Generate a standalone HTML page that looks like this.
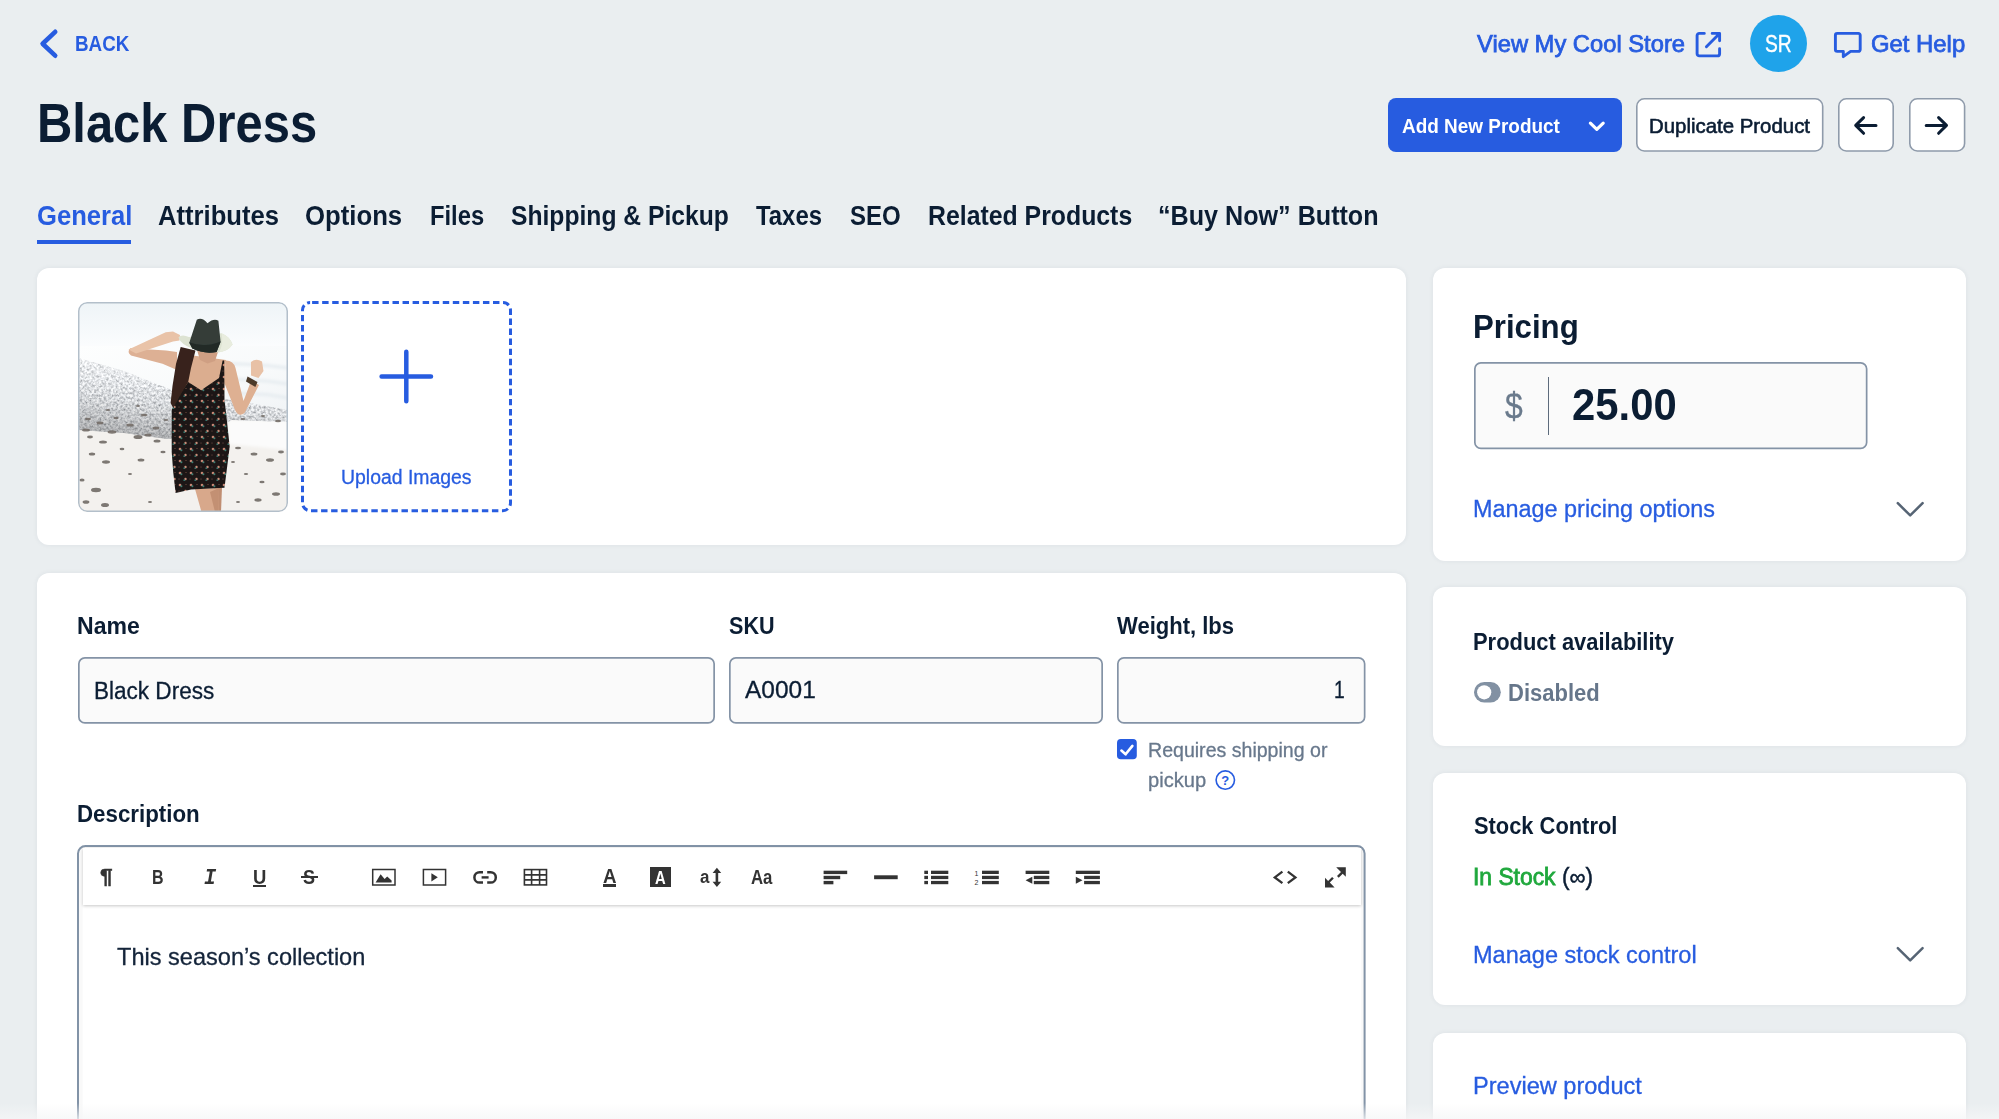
<!DOCTYPE html>
<html lang="en">
<head>
<meta charset="utf-8">
<title>Black Dress</title>
<style>
html,body{margin:0;padding:0;}
body{width:1999px;height:1119px;overflow:hidden;background:#eaeef0;font-family:"Liberation Sans",sans-serif;position:relative;}
.t{position:absolute;white-space:nowrap;line-height:1;transform-origin:0 0;display:block;}
.card{position:absolute;background:#fff;border-radius:12px;box-shadow:0 0 5px rgba(40,60,80,0.07);}
.inp{position:absolute;box-sizing:border-box;background:#fafafa;border:1.5px solid #8896a8;border-radius:7px;}
.btn{position:absolute;box-sizing:border-box;background:#fff;border:1.7px solid #8c98a9;border-radius:8.5px;}
.abs{position:absolute;}
svg{position:absolute;overflow:visible;}
.ti{position:absolute;color:#333;line-height:1;white-space:nowrap;}
</style>
</head>
<body>
<!-- tab underline -->
<div class="abs" style="left:37px;top:239.5px;width:93.5px;height:4.5px;background:#275ce0;"></div>
<!-- header buttons -->
<div class="abs" style="left:1388px;top:97.5px;width:234px;height:54px;background:#275ce0;border-radius:8px;"></div>
<svg style="left:1636px;top:97.6px;" width="187.5" height="53.8" viewBox="0 0 187.5 53.8"><rect x="0.8" y="0.8" width="185.9" height="52.199999999999996" rx="7.5" ry="7.5" fill="#fff" stroke="#8f9bab" stroke-width="1.6"/></svg>
<svg style="left:1838px;top:97.6px;" width="56" height="53.8" viewBox="0 0 56 53.8"><rect x="0.8" y="0.8" width="54.4" height="52.199999999999996" rx="7.5" ry="7.5" fill="#fff" stroke="#8f9bab" stroke-width="1.6"/></svg>
<svg style="left:1908.5px;top:97.6px;" width="56.4" height="53.8" viewBox="0 0 56.4 53.8"><rect x="0.8" y="0.8" width="54.8" height="52.199999999999996" rx="7.5" ry="7.5" fill="#fff" stroke="#8f9bab" stroke-width="1.6"/></svg>
<!-- avatar -->
<div class="abs" style="left:1750px;top:15.3px;width:57px;height:57px;border-radius:50%;background:#1fa3ea;"></div>
<!-- cards -->
<div class="card" style="left:37px;top:268px;width:1369px;height:277px;"></div>
<div class="card" style="left:37px;top:572.5px;width:1369px;height:600px;"></div>
<div class="card" style="left:1433px;top:267.5px;width:532.5px;height:293px;"></div>
<div class="card" style="left:1433px;top:587.2px;width:532.5px;height:159px;"></div>
<div class="card" style="left:1433px;top:772.7px;width:532.5px;height:232.6px;"></div>
<div class="card" style="left:1433px;top:1032.8px;width:532.5px;height:200px;"></div>
<!-- inputs -->
<svg style="left:77.5px;top:657px;" width="637" height="66.8" viewBox="0 0 637 66.8"><rect x="0.85" y="0.85" width="635.3" height="65.1" rx="6" ry="6" fill="#fafafa" stroke="#8493a6" stroke-width="1.7"/></svg>
<svg style="left:728.6px;top:657px;" width="374" height="66.8" viewBox="0 0 374 66.8"><rect x="0.85" y="0.85" width="372.3" height="65.1" rx="6" ry="6" fill="#fafafa" stroke="#8493a6" stroke-width="1.7"/></svg>
<svg style="left:1117px;top:657px;" width="248.5" height="66.8" viewBox="0 0 248.5 66.8"><rect x="0.85" y="0.85" width="246.8" height="65.1" rx="6" ry="6" fill="#fafafa" stroke="#8493a6" stroke-width="1.7"/></svg>
<svg style="left:1473.75px;top:362px;" width="393.5" height="87.3" viewBox="0 0 393.5 87.3"><rect x="0.85" y="0.85" width="391.8" height="85.6" rx="6" ry="6" fill="#fafafa" stroke="#8493a6" stroke-width="1.7"/></svg>
<div class="abs" style="left:1547.7px;top:377px;width:1.2px;height:57.5px;background:#5d6b7c;"></div>
<!-- editor -->
<svg style="left:77.2px;top:845.1px;" width="1288.6" height="320" viewBox="0 0 1288.6 320"><rect x="1" y="1" width="1286.6" height="318" rx="7.5" ry="7.5" fill="#f9f9f9" stroke="#8293a7" stroke-width="2"/><rect x="5.6" y="3" width="1278.6" height="317" fill="#fff"/></svg>
<div class="abs" style="left:83px;top:848px;width:1278px;height:56.5px;background:#fff;box-shadow:0 1px 3px rgba(0,0,0,0.22);"></div>
<!-- upload dashed box -->
<svg style="left:301.4px;top:301.2px;" width="211" height="211.2" viewBox="0 0 211 211.2">
<rect x="1.5" y="1.5" width="208" height="208.2" rx="7.6" ry="7.6" fill="none" stroke="#275ce0" stroke-width="3" stroke-dasharray="6.45 3.6" stroke-dashoffset="-2"/>
<path d="M80.6 75.5H130M105.3 50.7V100.2" stroke="#275ce0" stroke-width="4.5" stroke-linecap="round" fill="none"/>
</svg>
<!-- checkbox -->
<svg style="left:1116.9px;top:739.1px;" width="20" height="21" viewBox="0 0 20 21">
<rect x="0" y="0" width="19.8" height="20.2" rx="3.8" fill="#275ce0"/>
<path d="M4.4 11.6L8.6 15.3L15.4 6.9" stroke="#fff" stroke-width="2.6" fill="none" stroke-linecap="round" stroke-linejoin="round"/>
</svg>
<!-- product photo (vector approximation) -->
<div class="abs" style="left:77.7px;top:301.6px;width:210px;height:210px;box-sizing:border-box;border-radius:9px;overflow:hidden;background:#f2f4f5;">
<svg style="left:0;top:0;" width="210" height="210" viewBox="0 0 210 210">
<defs>
<linearGradient id="sky" gradientUnits="userSpaceOnUse" x1="0" y1="0" x2="0" y2="48"><stop offset="0" stop-color="#eef4f7"/><stop offset="1" stop-color="#fcfdfe"/></linearGradient>
<linearGradient id="sea" x1="0" y1="0" x2="1" y2="1"><stop offset="0" stop-color="#fdfefe"/><stop offset="0.6" stop-color="#f8fafb"/><stop offset="1" stop-color="#f1f4f6"/></linearGradient>
<linearGradient id="peb" x1="0" y1="0" x2="0" y2="1"><stop offset="0" stop-color="#dcdee0"/><stop offset="0.5" stop-color="#c3c5c7"/><stop offset="1" stop-color="#b1b1b1"/></linearGradient>
<filter id="nz" x="0" y="0" width="100%" height="100%">
<feTurbulence type="fractalNoise" baseFrequency="0.42" numOctaves="3" seed="7" result="n"/>
<feColorMatrix in="n" type="matrix" values="1.15 0 0 0 0.17  1.15 0 0 0 0.19  1.15 0 0 0 0.215  0 0 0 0 1" result="a"/>
<feComposite in="a" in2="SourceGraphic" operator="in"/>
</filter>
<filter id="b1"><feGaussianBlur stdDeviation="0.7"/></filter>
<filter id="b2"><feGaussianBlur stdDeviation="1.6"/></filter>
<pattern id="flo" width="11" height="12" patternUnits="userSpaceOnUse">
<rect width="11" height="12" fill="#1d1917"/>
<circle cx="3" cy="3" r="1.3" fill="#c58472"/><circle cx="4.4" cy="4.3" r="1" fill="#3f7f74"/>
<circle cx="8.5" cy="9" r="1.2" fill="#c98d7a"/><circle cx="7.3" cy="10.2" r="0.9" fill="#37756c"/>
<circle cx="9" cy="2.5" r="0.5" fill="#8a5548"/><circle cx="2" cy="9" r="0.5" fill="#8f5a4e"/>
</pattern>
</defs>
<rect width="210" height="210" fill="url(#sky)"/>
<!-- sea -->
<path d="M0 44H210V112L166 100L94 88L46 69L0 56Z" fill="url(#sea)"/>
<path d="M0 46H210" stroke="#e4ebef" stroke-width="2" filter="url(#b1)"/>
<path d="M120 62Q165 60 210 66M140 78Q175 76 210 82M150 92Q180 90 210 96" stroke="#e6ecf0" stroke-width="3" fill="none" filter="url(#b2)"/>
<!-- sand -->
<path d="M0 118H210V210H0Z" fill="#f3f1ee"/>
<path d="M150 118H210V148L150 142Z" fill="#fbfbfb" filter="url(#b2)"/>
<!-- pebbles -->
<linearGradient id="pebd" x1="0.6" y1="0" x2="0.3" y2="1"><stop offset="0" stop-color="#fff" stop-opacity="0.6"/><stop offset="0.4" stop-color="#fff" stop-opacity="0.1"/><stop offset="0.55" stop-color="#444" stop-opacity="0.05"/><stop offset="1" stop-color="#222" stop-opacity="0.3"/></linearGradient>
<g filter="url(#b1)">
<path d="M0 56L46 69L94 88L166 100L210 108V120L154 118L122 134L89 137L46 131L0 128Z" fill="#000" filter="url(#nz)"/>
<path d="M0 56L46 69L94 88L166 100L210 108V120L154 118L122 134L89 137L46 131L0 128Z" fill="url(#pebd)"/>
</g>
<g fill="#6f6862" filter="url(#b1)" opacity="0.85">
<ellipse cx="10" cy="117" rx="3" ry="1.3"/><ellipse cx="22" cy="121" rx="3.4" ry="1.4"/><ellipse cx="38" cy="116" rx="2.6" ry="1.2"/><ellipse cx="52" cy="123" rx="3.6" ry="1.5"/>
<ellipse cx="66" cy="113" rx="3.2" ry="1.3"/><ellipse cx="78" cy="126" rx="3.4" ry="1.5"/><ellipse cx="30" cy="108" rx="2.2" ry="1"/><ellipse cx="60" cy="104" rx="2" ry="0.9"/>
<ellipse cx="8" cy="128" rx="4" ry="1.6"/><ellipse cx="34" cy="130" rx="4.4" ry="1.7"/><ellipse cx="70" cy="133" rx="3.6" ry="1.5"/><ellipse cx="88" cy="118" rx="2.4" ry="1.1"/>
<ellipse cx="165" cy="117" rx="2.6" ry="1.1"/><ellipse cx="185" cy="114" rx="2.2" ry="1"/><ellipse cx="200" cy="119" rx="3" ry="1.2"/>
</g>
<!-- scattered rocks on sand -->
<g fill="#7d7873" filter="url(#b1)">
<ellipse cx="12" cy="135" rx="3" ry="1.4"/><ellipse cx="25" cy="140" rx="4" ry="1.6"/><ellipse cx="60" cy="135" rx="4.5" ry="2"/><ellipse cx="79" cy="139" rx="3.5" ry="1.6"/>
<ellipse cx="14" cy="152" rx="3.2" ry="1.5"/><ellipse cx="28" cy="160" rx="4" ry="1.7"/><ellipse cx="63" cy="158" rx="3.4" ry="1.5"/><ellipse cx="44" cy="147" rx="2.4" ry="1.2"/>
<ellipse cx="4" cy="178" rx="2.6" ry="1.6"/><ellipse cx="18" cy="188" rx="5" ry="2.2"/><ellipse cx="27" cy="203" rx="4" ry="2"/><ellipse cx="8" cy="200" rx="3.4" ry="1.8"/>
<ellipse cx="72" cy="200" rx="2" ry="1"/><ellipse cx="52" cy="172" rx="2" ry="1"/><ellipse cx="85" cy="150" rx="2.6" ry="1.2"/>
<ellipse cx="160" cy="146" rx="3" ry="1.3"/><ellipse cx="176" cy="152" rx="3.4" ry="1.5"/><ellipse cx="192" cy="158" rx="4" ry="1.8"/><ellipse cx="203" cy="150" rx="3" ry="1.4"/>
<ellipse cx="168" cy="172" rx="2.2" ry="1.1"/><ellipse cx="184" cy="180" rx="2.6" ry="1.2"/><ellipse cx="198" cy="192" rx="4" ry="1.8"/><ellipse cx="180" cy="198" rx="3.6" ry="1.7"/><ellipse cx="160" cy="200" rx="2" ry="1"/>
<ellipse cx="205" cy="172" rx="3" ry="1.4"/><ellipse cx="155" cy="160" rx="2" ry="1"/>
</g>
<!-- woman -->
<g filter="url(#b1)">
<!-- legs -->
<path d="M136 186L144 185.5L143 210H136Z" fill="#c08e72"/>
<path d="M117 187L141 186L140.7 210H123.5Z" fill="#d8a88b"/>
<path d="M132 190L137 210H140.7L141 186Z" fill="#c39073"/>
<!-- raised arm (viewer left) -->
<path d="M52.3 46.2L88 48.6L99 50L99 68L84.5 61.7L53 53.4Q48.5 50 52.3 46.2Z" fill="#ddb094"/>
<path d="M50.5 47.6L87.7 30.2L95 29.4L102 33L101.5 38.6L95 39.6L58 51.5Z" fill="#e9c3a8"/>
<!-- other arm (viewer right) -->
<path d="M148 58.5Q155.5 58.5 157.5 66L165.5 99L173.2 78.5L181 83L166.5 111Q160.5 115.5 157 108L146 80Z" fill="#deb092"/>
<path d="M173 60Q178 56 184 59.5L185.5 69L180.5 76L173 73.5Z" fill="#e8c1a6"/>
<path d="M169.5 74.5L179.5 80L177.4 85L168 79.6Z" fill="#4d3b2c"/>
<!-- torso skin -->
<path d="M104 52L148 58L146 92L104 92Z" fill="#dbad8f"/>
<path d="M119 48L140 50L137 59L129.5 61.5L122 58Z" fill="#cf9f83"/>
<!-- dress -->
<path d="M110.2 80L123.1 88.2L141 76L144.6 58.4L146.2 58.6L146.5 98L148.5 115L151.7 144.4L146.5 185.8L113.1 187.6L97.6 191L95.2 170L93.7 150L93.7 108L99.5 94.9Z" fill="url(#flo)"/>
<!-- hair -->
<path d="M102.7 45L117.5 48.4L113 66L110.2 80L103 92L98.5 100L95.2 106L92.6 101L94.5 84L98 62Z" fill="#38231b"/>
<!-- hat brim -->
<path d="M100.4 35.6Q103.5 31.5 111 35L143.5 31.2Q152 34.5 154.6 42.6Q150 49.5 140 50.4L114 46.6Q103 42.4 100.4 35.6Z" fill="#dde3d2"/>
<path d="M143.5 31.2Q152 34.5 154.6 42.6Q150 49.5 141 50.2Q146 42 143.5 31.2Z" fill="#e9eddf"/>
<!-- hat crown -->
<path d="M118.8 17.7Q124 14.8 129.5 21.2Q136 15.8 140.4 18.8L142.6 40L138.6 50Q126 52.4 114.3 46.6L111.2 41Z" fill="#343e39"/>
<path d="M111.4 40.2Q126 46 142.6 39.4L138.6 50Q126 52.4 114.3 46.6Z" fill="#232b28"/>
</g>
</svg>
<svg style="left:0;top:0;" width="210" height="210" viewBox="0 0 210 210"><rect x="0.75" y="0.75" width="208.5" height="208.5" rx="8.3" ry="8.3" fill="none" stroke="#b3bfca" stroke-width="1.5"/></svg>
</div>
<!-- header icons -->
<svg style="left:0;top:0;" width="1999" height="160" viewBox="0 0 1999 160" fill="none" stroke-linecap="round" stroke-linejoin="round">
<path d="M55.2 31.8L42.6 43.75L55.2 55.7" stroke="#275ce0" stroke-width="4.6"/>
<g stroke="#275ce0" stroke-width="2.9">
<path d="M1704.3 33.4H1699.3a2.2 2.2 0 0 0 -2.2 2.2V53.7a2.2 2.2 0 0 0 2.2 2.2H1717.4a2.2 2.2 0 0 0 2.2 -2.2V48.7"/>
<path d="M1712.2 33.4H1719.6V40.8M1719.3 33.7L1706.4 46.7"/>
<path d="M1837.2 33.4H1858.4a1.8 1.8 0 0 1 1.8 1.8V49.6a1.8 1.8 0 0 1 -1.8 1.8H1850.6L1843.3 56.6V51.4H1837.2a1.8 1.8 0 0 1 -1.8 -1.8V35.2a1.8 1.8 0 0 1 1.8 -1.8Z"/>
</g>
<path d="M1590.4 123.2L1596.8 129.3L1603.2 123.2" stroke="#fff" stroke-width="3.2"/>
<g stroke="#0b1d33" stroke-width="3">
<path d="M1876 125.4H1856.2M1863.6 117.6L1855.7 125.4L1863.6 133.3"/>
<path d="M1926.2 125.4H1946M1938.6 117.6L1946.5 125.4L1938.6 133.3"/>
</g>
</svg>
<!-- card chevrons -->
<svg style="left:1890px;top:495px;" width="40" height="30" viewBox="1890 495 40 30" fill="none" stroke="#566474" stroke-width="2.5" stroke-linecap="round" stroke-linejoin="round"><path d="M1897.8 503.2L1910.2 515.4L1922.6 503.2"/></svg>
<svg style="left:1890px;top:940px;" width="40" height="30" viewBox="1890 940 40 30" fill="none" stroke="#566474" stroke-width="2.5" stroke-linecap="round" stroke-linejoin="round"><path d="M1897.8 948.2L1910.2 960.4L1922.6 948.2"/></svg>
<!-- toggle -->
<svg style="left:1473.5px;top:681.8px;" width="27" height="21" viewBox="0 0 27 21"><rect x="0" y="0" width="26.8" height="20.6" rx="10.3" fill="#8291a3"/><circle cx="10.2" cy="10.35" r="7.1" fill="#fff"/></svg>
<!-- help icon -->
<svg style="left:1215px;top:769.7px;" width="21" height="21" viewBox="0 0 21 21"><circle cx="10.3" cy="10.1" r="9.2" fill="none" stroke="#275ce0" stroke-width="1.6"/><text x="10.3" y="15.1" text-anchor="middle" font-family="Liberation Sans, sans-serif" font-weight="700" font-size="13" fill="#275ce0">?</text></svg>
<!-- toolbar glyph buttons (text) -->
<span class="ti" style="left:100.4px;top:865.2px;font-size:21px;font-weight:700;transform:scaleX(1.08);transform-origin:0 0;-webkit-text-stroke:0.5px #333;">&para;</span>
<span class="ti" style="left:152.3px;top:867.2px;font-size:20.5px;font-weight:700;transform:scaleX(0.78);transform-origin:0 0;">B</span>
<span class="ti" style="left:203.5px;top:868.4px;font-size:22px;font-weight:700;font-style:italic;font-family:'Liberation Mono',monospace;transform:scaleX(0.92);transform-origin:0 0;">I</span>
<span class="ti" style="left:252.6px;top:867.2px;font-size:20.5px;font-weight:700;transform:scaleX(0.9);transform-origin:0 0;">U</span>
<div class="abs" style="left:252.6px;top:884.8px;width:13.6px;height:2.2px;background:#333;"></div>
<span class="ti" style="left:303.2px;top:867.2px;font-size:20.5px;font-weight:700;transform:scaleX(0.88);transform-origin:0 0;">S</span>
<div class="abs" style="left:301px;top:875.8px;width:17.2px;height:1.8px;background:#333;"></div>
<span class="ti" style="left:602.9px;top:866.8px;font-size:19.5px;font-weight:700;transform:scaleX(0.96);transform-origin:0 0;">A</span>
<div class="abs" style="left:602.8px;top:884.2px;width:13.6px;height:2.6px;background:#333;"></div>
<div class="abs" style="left:650px;top:867.3px;width:20.5px;height:19.8px;background:#333;"></div>
<span class="ti" style="left:655px;top:869px;font-size:18.5px;font-weight:700;color:#fff;transform:scaleX(0.8);transform-origin:0 0;">A</span>
<span class="ti" style="left:699.8px;top:867.6px;font-size:18px;font-weight:700;transform:scaleX(0.94);transform-origin:0 0;">a</span>
<span class="ti" style="left:751px;top:867.6px;font-size:19.5px;font-weight:700;transform:scaleX(0.86);transform-origin:0 0;">Aa</span>
<!-- toolbar svg icons -->
<svg style="left:0;top:860px;" width="1400" height="36" viewBox="0 860 1400 36" fill="#333">
<!-- image -->
<rect x="372.7" y="869.5" width="22.3" height="15.5" fill="none" stroke="#333" stroke-width="1.5"/>
<path d="M375.6 882.6L380.6 874.2L384.6 879L387.2 876.4L391.6 880.4V882.6Z"/>
<!-- video -->
<rect x="423.4" y="869.5" width="22.2" height="15.5" fill="none" stroke="#333" stroke-width="1.5"/>
<path d="M431.4 873.2L437.8 877.3L431.4 881.4Z"/>
<!-- link -->
<g fill="none" stroke="#333" stroke-width="2.5" stroke-linecap="butt">
<path d="M483 872.2H479.6a5.2 5.2 0 0 0 0 10.4H483"/>
<path d="M487.2 872.2H490.6a5.2 5.2 0 0 1 0 10.4H487.2"/>
<path d="M481.6 877.4H488.6" stroke-width="2.4"/>
</g>
<!-- table -->
<g fill="none" stroke="#333" stroke-width="1.6">
<rect x="524.4" y="869.6" width="22.1" height="15.3"/>
<path d="M524.4 874.9H546.5M524.4 879.9H546.5M531.6 869.6V884.9M539.6 869.6V884.9"/>
</g>
<!-- a arrows -->
<path d="M716.9 867.7L721.2 873H718.2V881.7H721.2L716.9 887L712.6 881.7H715.6V873H712.6Z"/>
<!-- align -->
<rect x="823.6" y="870.7" width="23.6" height="3.4"/><rect x="823.6" y="875.8" width="16.6" height="3.4"/><rect x="823.6" y="880.9" width="9.8" height="3.4"/>
<!-- hr -->
<rect x="874.1" y="875.3" width="23.6" height="3.9"/>
<!-- ul -->
<rect x="924.3" y="870.7" width="3.7" height="3.3"/><rect x="924.3" y="875.8" width="3.7" height="3.3"/><rect x="924.3" y="880.9" width="3.7" height="3.3"/>
<rect x="931" y="870.7" width="17.3" height="3.3"/><rect x="931" y="875.8" width="17.3" height="3.3"/><rect x="931" y="880.9" width="17.3" height="3.3"/>
<!-- ol -->
<rect x="982" y="870.7" width="16.8" height="3.3"/><rect x="982" y="875.8" width="16.8" height="3.3"/><rect x="982" y="880.9" width="16.8" height="3.3"/>
<text x="974.6" y="876.3" font-family="Liberation Sans, sans-serif" font-size="7">1</text>
<text x="974.6" y="884.6" font-family="Liberation Sans, sans-serif" font-size="7">2</text>
<!-- outdent -->
<rect x="1025.6" y="870.7" width="23.7" height="3.3"/><rect x="1033.8" y="875.8" width="15.5" height="3.3"/><rect x="1033.8" y="880.9" width="15.5" height="3.3"/>
<path d="M1032.3 876.8V883.8L1025.6 880.3Z"/>
<!-- indent -->
<rect x="1075.8" y="870.7" width="24.1" height="3.3"/><rect x="1084.1" y="875.8" width="15.8" height="3.3"/><rect x="1084.1" y="880.9" width="15.8" height="3.3"/>
<path d="M1075.8 876.8V883.8L1082.5 880.3Z"/>
<!-- code -->
<path d="M1282.4 871.7L1274.8 877.4L1282.4 883.1M1287.8 871.7L1295.4 877.4L1287.8 883.1" fill="none" stroke="#333" stroke-width="2.3"/>
<!-- fullscreen -->
<path d="M1336.2 867.2H1345.8V876.8L1342.7 873.7L1338.7 877.7L1337 876L1341 872Z"/>
<path d="M1325 887.4V877.8L1328.1 880.9L1332.1 876.9L1333.8 878.6L1329.8 882.6L1334.6 887.4Z"/>
</svg>

<!-- text -->
<header>
<span class="t" style="left:74.54px;top:33.33px;font-size:22px;color:#275ce0;transform:scaleX(0.8554);font-weight:700;">BACK</span>
<span class="t" style="left:37.38px;top:95.35px;font-size:56px;color:#0b1d33;transform:scaleX(0.8735);font-weight:700;">Black Dress</span>
<span class="t" style="left:1476.70px;top:33.11px;font-size:23.2px;color:#275ce0;transform:scaleX(1.0238);-webkit-text-stroke:0.75px #275ce0;">View My Cool Store</span>
<span class="t" style="left:1764.78px;top:32.94px;font-size:23.4px;color:#ffffff;transform:scaleX(0.8202);-webkit-text-stroke:0.4px #ffffff;">SR</span>
<span class="t" style="left:1871.47px;top:33.11px;font-size:23.2px;color:#275ce0;transform:scaleX(1.0289);-webkit-text-stroke:0.75px #275ce0;">Get Help</span>
<span class="t" style="left:1401.50px;top:115.07px;font-size:21px;color:#ffffff;transform:scaleX(0.9022);font-weight:700;">Add New Product</span>
<span class="t" style="left:1648.73px;top:115.07px;font-size:21px;color:#0b1d33;transform:scaleX(0.9714);-webkit-text-stroke:0.6px #0b1d33;">Duplicate Product</span>
</header>
<nav>
<span class="t" style="left:36.59px;top:202.15px;font-size:28px;color:#275ce0;transform:scaleX(0.9143);font-weight:700;">General</span>
<span class="t" style="left:157.60px;top:202.15px;font-size:28px;color:#0b1d33;transform:scaleX(0.9146);font-weight:700;">Attributes</span>
<span class="t" style="left:305.08px;top:202.15px;font-size:28px;color:#0b1d33;transform:scaleX(0.9185);font-weight:700;">Options</span>
<span class="t" style="left:429.55px;top:202.15px;font-size:28px;color:#0b1d33;transform:scaleX(0.8484);font-weight:700;">Files</span>
<span class="t" style="left:511.20px;top:202.15px;font-size:28px;color:#0b1d33;transform:scaleX(0.8805);font-weight:700;">Shipping &amp; Pickup</span>
<span class="t" style="left:756.00px;top:202.15px;font-size:28px;color:#0b1d33;transform:scaleX(0.8535);font-weight:700;">Taxes</span>
<span class="t" style="left:849.50px;top:202.15px;font-size:28px;color:#0b1d33;transform:scaleX(0.8586);font-weight:700;">SEO</span>
<span class="t" style="left:927.71px;top:202.15px;font-size:28px;color:#0b1d33;transform:scaleX(0.8867);font-weight:700;">Related Products</span>
<span class="t" style="left:1157.90px;top:202.15px;font-size:28px;color:#0b1d33;transform:scaleX(0.8976);font-weight:700;">“Buy Now” Button</span>
</nav>
<main>
<span class="t" style="left:341.13px;top:467.12px;font-size:20px;color:#275ce0;transform:scaleX(0.9706);-webkit-text-stroke:0.3px #275ce0;">Upload Images</span>
<span class="t" style="left:77.00px;top:614.63px;font-size:23px;color:#0b1d33;transform:scaleX(1.0024);font-weight:700;">Name</span>
<span class="t" style="left:728.80px;top:614.63px;font-size:23px;color:#0b1d33;transform:scaleX(0.9385);font-weight:700;">SKU</span>
<span class="t" style="left:1116.80px;top:614.63px;font-size:23px;color:#0b1d33;transform:scaleX(0.9576);font-weight:700;">Weight, lbs</span>
<span class="t" style="left:94.02px;top:679.78px;font-size:23px;color:#0b1d33;transform:scaleX(0.9798);-webkit-text-stroke:0.3px #0b1d33;">Black Dress</span>
<span class="t" style="left:745.00px;top:679.27px;font-size:23.6px;color:#0b1d33;transform:scaleX(1.0372);-webkit-text-stroke:0.3px #0b1d33;">A0001</span>
<span class="t" style="left:1333.78px;top:679.27px;font-size:23.6px;color:#0b1d33;transform:scaleX(0.8182);-webkit-text-stroke:0.3px #0b1d33;">1</span>
<span class="t" style="left:1148.02px;top:739.92px;font-size:20px;color:#68788c;transform:scaleX(0.9782);-webkit-text-stroke:0.3px #68788c;">Requires shipping or</span>
<span class="t" style="left:1147.99px;top:769.62px;font-size:20px;color:#68788c;transform:scaleX(1.0055);-webkit-text-stroke:0.3px #68788c;">pickup</span>
<span class="t" style="left:77.03px;top:803.38px;font-size:23px;color:#0b1d33;transform:scaleX(0.9701);font-weight:700;">Description</span>
<span class="t" style="left:117.00px;top:944.83px;font-size:24px;color:#14243a;transform:scaleX(0.9814);-webkit-text-stroke:0.3px #14243a;">This season’s collection</span>
</main>
<aside>
<span class="t" style="left:1472.61px;top:309.92px;font-size:33px;color:#0b1d33;transform:scaleX(0.9452);font-weight:700;">Pricing</span>
<span class="t" style="left:1504.50px;top:387.63px;font-size:37px;color:#6a7a8c;transform:scaleX(0.8600);-webkit-text-stroke:0.3px #6a7a8c;">$</span>
<span class="t" style="left:1572.04px;top:383.94px;font-size:43.6px;color:#0b1d33;transform:scaleX(0.9593);font-weight:700;">25.00</span>
<span class="t" style="left:1473.48px;top:498.38px;font-size:23px;color:#275ce0;transform:scaleX(1.0177);-webkit-text-stroke:0.3px #275ce0;">Manage pricing options</span>
<span class="t" style="left:1473.05px;top:630.68px;font-size:23px;color:#0b1d33;transform:scaleX(0.9533);font-weight:700;">Product availability</span>
<span class="t" style="left:1508.04px;top:681.88px;font-size:23px;color:#66768a;transform:scaleX(0.9561);font-weight:700;">Disabled</span>
<span class="t" style="left:1474.00px;top:815.18px;font-size:23px;color:#0b1d33;transform:scaleX(0.9505);font-weight:700;">Stock Control</span>
<span class="t" style="left:1473.21px;top:865.88px;font-size:23px;color:#1fa83c;transform:scaleX(0.9927);-webkit-text-stroke:0.8px #1fa83c;">In Stock</span>
<span class="t" style="left:1562.02px;top:865.88px;font-size:23px;color:#0b1d33;transform:scaleX(0.9782);-webkit-text-stroke:0.5px #0b1d33;">(∞)</span>
<span class="t" style="left:1472.98px;top:943.88px;font-size:23px;color:#275ce0;transform:scaleX(1.0231);-webkit-text-stroke:0.3px #275ce0;">Manage stock control</span>
<span class="t" style="left:1472.98px;top:1074.88px;font-size:23px;color:#275ce0;transform:scaleX(1.0242);-webkit-text-stroke:0.3px #275ce0;">Preview product</span>
</aside><div class="abs" style="left:0;top:1103px;width:1999px;height:16px;background:linear-gradient(to bottom,rgba(245,246,247,0),rgba(245,246,247,0.75));"></div>
</body>
</html>
